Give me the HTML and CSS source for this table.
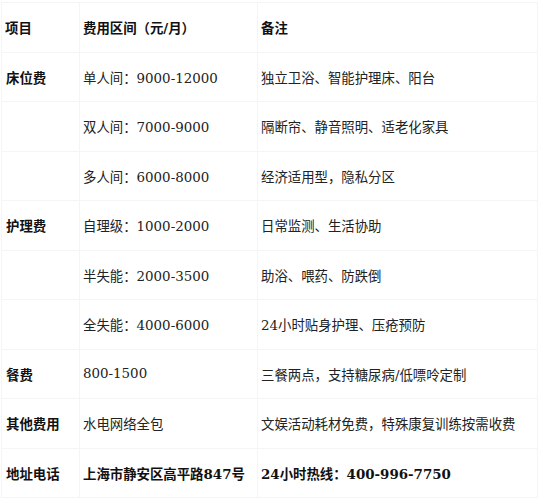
FILE: index.html
```
<!DOCTYPE html>
<html lang="zh-CN">
<head>
<meta charset="utf-8">
<link rel="stylesheet" href="styles.css">
</head>
<body>
<table class="fees">
  <colgroup><col class="c1"><col class="c2"><col class="c3"></colgroup>
  <thead>
    <tr><th>项目</th><th>费用区间（元/月）</th><th>备注</th></tr>
  </thead>
  <tbody>
    <tr><td class="k">床位费</td><td>单人间：9000-12000</td><td>独立卫浴、智能护理床、阳台</td></tr>
    <tr><td class="k"></td><td>双人间：7000-9000</td><td>隔断帘、静音照明、适老化家具</td></tr>
    <tr><td class="k"></td><td>多人间：6000-8000</td><td>经济适用型，隐私分区</td></tr>
    <tr><td class="k">护理费</td><td>自理级：1000-2000</td><td>日常监测、生活协助</td></tr>
    <tr><td class="k"></td><td>半失能：2000-3500</td><td>助浴、喂药、防跌倒</td></tr>
    <tr><td class="k"></td><td>全失能：4000-6000</td><td>24小时贴身护理、压疮预防</td></tr>
    <tr><td class="k">餐费</td><td>800-1500</td><td>三餐两点，支持糖尿病/低嘌呤定制</td></tr>
    <tr><td class="k">其他费用</td><td>水电网络全包</td><td>文娱活动耗材免费，特殊康复训练按需收费</td></tr>
    <tr class="strong"><td class="k">地址电话</td><td>上海市静安区高平路847号</td><td>24小时热线：400-996-7750</td></tr>
  </tbody>
</table>
</body>
</html>
```
FILE: styles.css
```
html, body {
  margin: 0;
  padding: 0;
  background: #ffffff;
}
body {
  font-family: "DejaVu Serif", "Noto Sans CJK SC", serif;
  font-size: 13.4px;
  color: #222;
}
.fees {
  border-collapse: collapse;
  margin: 2px 0 0 1px;
  width: 537px;
  table-layout: fixed;
}
.c1 { width: 78px; }
.c2 { width: 178px; }
.c3 { width: auto; }
.fees th, .fees td {
  border: 1px solid #f5f5f5;
  height: 49.5px;
  padding: 0 3px;
  text-align: left;
  vertical-align: middle;
  white-space: nowrap;
  box-sizing: border-box;
}
.fees th {
  font-weight: bold;
  color: #111;
}
.fees td.k {
  font-weight: bold;
  color: #111;
  padding-left: 4px;
}
.fees tr.strong td {
  font-weight: bold;
  color: #111;
}
```
